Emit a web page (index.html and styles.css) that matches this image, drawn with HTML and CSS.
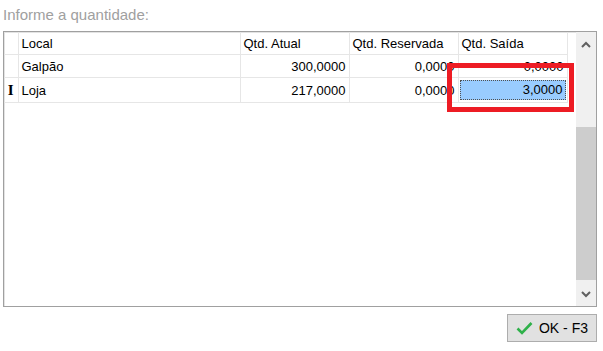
FILE: index.html
```html
<!DOCTYPE html>
<html lang="pt-BR">

<head>
  <meta charset="UTF-8">
  <meta name="viewport" content="width=device-width, initial-scale=1.0">
  <title>Informe a quantidade</title>
  <link rel="stylesheet" href="styles.css">
</head>

<body>
  <div class="dialog">
    <div class="caption">Informe a quantidade:</div>

    <!-- Grid -->
    <div class="grid">
      <div class="grid-body">
        <table>
          <colgroup>
            <col class="col-ind">
            <col class="col-local">
            <col class="col-num">
            <col class="col-num">
            <col class="col-num">
          </colgroup>
          <thead>
            <tr>
              <th class="ind"></th>
              <th>Local</th>
              <th>Qtd. Atual</th>
              <th>Qtd. Reservada</th>
              <th>Qtd. Saída</th>
            </tr>
          </thead>
          <tbody>
            <tr>
              <td class="ind"></td>
              <td>Galpão</td>
              <td class="num">300,0000</td>
              <td class="num">0,0000</td>
              <td class="num">0,0000</td>
            </tr>
            <tr>
              <td class="ind"><span class="cursor">I</span></td>
              <td>Loja</td>
              <td class="num">217,0000</td>
              <td class="num">0,0000</td>
              <td class="num selected"><span class="focus">3,0000</span></td>
            </tr>
          </tbody>
        </table>
      </div>

      <div class="scrollbar">
        <div class="arrow">
          <svg width="10" height="7" viewBox="0 0 10 7"><path d="M1 6 L5 2 L9 6" fill="none" stroke="#606060" stroke-width="2"/></svg>
        </div>
        <div class="track">
          <div class="thumb"></div>
        </div>
        <div class="arrow">
          <svg width="10" height="7" viewBox="0 0 10 7"><path d="M1 1 L5 5 L9 1" fill="none" stroke="#606060" stroke-width="2"/></svg>
        </div>
      </div>
    </div>

    <div class="footer">
      <button type="button" class="ok-btn">
        <svg width="17" height="14" viewBox="0 0 17 14"><path d="M1.5 7.5 L6 12 L15.5 2" fill="none" stroke="#2fb14a" stroke-width="2.6"/></svg>
        OK - F3
      </button>
    </div>
  </div>

  <!-- highlight annotation -->
  <div class="highlight"></div>
</body>

</html>
```

FILE: styles.css
```css
/* Page */
body {
  margin: 0;
  background-color: #ffffff;
  font-family: "Liberation Sans", Arial, sans-serif;
  font-size: 13px;
  color: #000;
}

.dialog {
  width: 603px;
  height: 351px;
  display: flex;
  flex-direction: column;
}

.caption {
  padding: 6px 0 0 3px;
  height: 25px;
  font-size: 15px;
  color: #a0a0a0;
}

/* Grid */
.grid {
  margin-left: 3px;
  width: 592px;
  height: 274px;
  border: 1px solid #a0a0a0;
  box-shadow: inset 1px 1px 0 #e3e3e3;
  display: flex;
  background-color: #fff;
}

.grid-body {
  flex: 1;
}

table {
  border-collapse: collapse;
  table-layout: fixed;
  width: 563px;
}

.col-ind {
  width: 14px;
}

.col-local {
  width: 222px;
}

.col-num {
  width: 109px;
}

th,
td {
  height: 22px;
  padding: 0 3px;
  border-right: 1px solid #e6e6e6;
  border-bottom: 1px solid #e6e6e6;
  font-weight: normal;
  text-align: left;
  white-space: nowrap;
  overflow: hidden;
}

td.num {
  text-align: right;
}

.ind {
  padding: 0;
  text-align: center;
}

.cursor {
  font-family: "Liberation Serif", serif;
  font-weight: bold;
  font-size: 15px;
}

td.selected {
  padding: 1px 1px;
}

.focus {
  display: block;
  height: 18px;
  line-height: 18px;
  padding-right: 2px;
  background-color: #99ccff;
  border: 1px dotted #505050;
}

/* Scrollbar */
.scrollbar {
  width: 20px;
  margin-left: 8px;
  background-color: #f0f0f0;
  display: flex;
  flex-direction: column;
}

.arrow {
  height: 24px;
  display: flex;
  align-items: center;
  justify-content: center;
}

.track {
  flex: 1;
  display: flex;
  flex-direction: column;
  justify-content: flex-end;
  padding-bottom: 2px;
}

.thumb {
  height: 153px;
  background-color: #cdcdcd;
}

/* Footer */
.footer {
  display: flex;
  justify-content: flex-end;
  padding: 7px 6px 0 0;
}

.ok-btn {
  width: 90px;
  height: 28px;
  display: flex;
  align-items: center;
  justify-content: center;
  gap: 6px;
  background-color: #e1e1e1;
  border: 1px solid #adadad;
  font-family: "Liberation Sans", Arial, sans-serif;
  font-size: 14px;
  color: #000;
  padding: 0;
}

/* Red annotation box */
.highlight {
  position: absolute;
  left: 447px;
  top: 63px;
  width: 117px;
  height: 39px;
  border: 5px solid #ed1c24;
}
```
